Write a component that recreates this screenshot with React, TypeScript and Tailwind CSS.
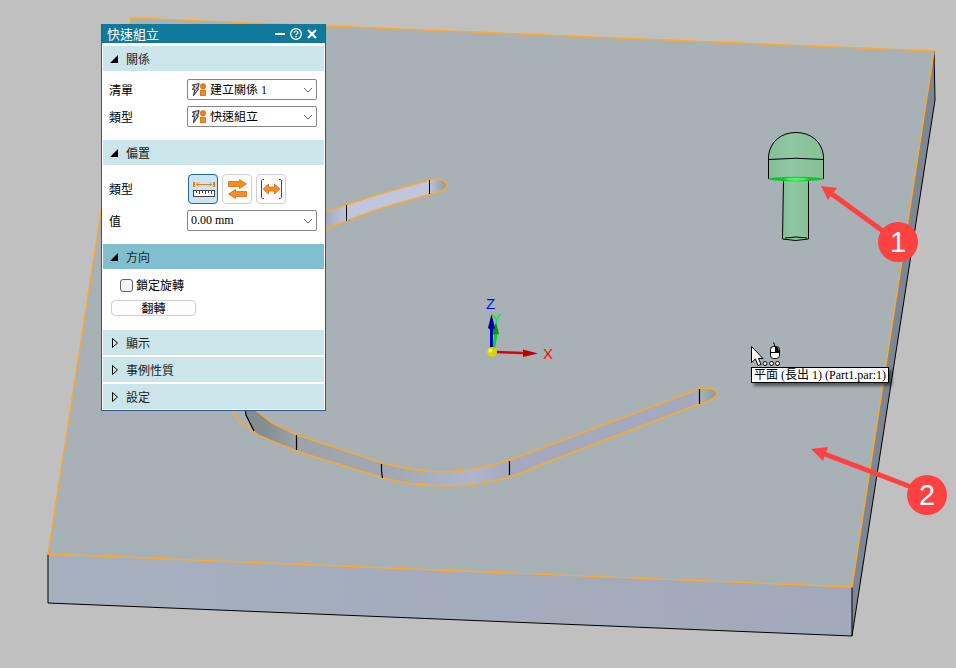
import { useState } from 'react'
import type { ReactNode } from 'react'

const sans = "font-['Noto_Sans_CJK_TC',sans-serif]"
const serif = "font-['Liberation_Serif','Noto_Sans_CJK_TC',serif]"

function Scene() {
    return (
        <svg
            viewBox="0 0 956 668"
            preserveAspectRatio="xMinYMin slice"
            className="absolute inset-0 h-full w-full"
            aria-hidden="true"
        >
            <defs>
                <linearGradient id="front" x1="0" x2="1">
                    <stop offset="0" stopColor="#a6b0bf" />
                    <stop offset="1" stopColor="#a2a9ba" />
                </linearGradient>
                <linearGradient id="slotTop" gradientUnits="userSpaceOnUse" x1="326" y1="0" x2="447" y2="0">
                    <stop offset="0" stopColor="#a3a9bd" />
                    <stop offset="0.17" stopColor="#bfc5dd" />
                    <stop offset="0.85" stopColor="#c0c6dd" />
                    <stop offset="1" stopColor="#8e979e" />
                </linearGradient>
                <linearGradient id="slotLow" gradientUnits="userSpaceOnUse" x1="245" y1="0" x2="717" y2="0">
                    <stop offset="0" stopColor="#828b8d" />
                    <stop offset="0.04" stopColor="#848d90" />
                    <stop offset="0.11" stopColor="#9ba4ac" />
                    <stop offset="0.3" stopColor="#a0a8b3" />
                    <stop offset="0.48" stopColor="#afb6cc" />
                    <stop offset="0.56" stopColor="#a4aabd" />
                    <stop offset="0.95" stopColor="#a4aabd" />
                    <stop offset="0.965" stopColor="#a9b1b8" />
                    <stop offset="1" stopColor="#8e979c" />
                </linearGradient>
                <linearGradient id="bolt" x1="0" x2="1">
                    <stop offset="0" stopColor="#83bf98" />
                    <stop offset="0.4" stopColor="#90c7a4" />
                    <stop offset="1" stopColor="#85c096" />
                </linearGradient>
            </defs>

            {/* Placa */}
            <path d="M934 51 L935 100 L852 636 L852 587 Z" fill="#7e8694" />
            <path d="M48 554 L852 587 L852 636 L48 603 Z" fill="url(#front)" />
            <path d="M131 18 L934 51 L852 587 L48 554 Z" fill="#a7b1b6" />
            <path d="M48 554 L48 603 L852 636 L852 587 M852 636 L935 100 L934 51" fill="none" stroke="#000" strokeWidth="1" />
            <path d="M131 18 L934 51 L852 587 L48 554 Z" fill="none" stroke="#fba92e" strokeWidth="1.4" />

            {/* Ranura superior */}
            <path
                d="M300 221 L346 205 L376 195 L430 180 Q446 177 447 186 Q446 191 430 194 L376 210 L346 221 L300 239"
                fill="url(#slotTop)"
                stroke="#fba92e"
                strokeWidth="1.4"
            />
            <path d="M346.500 205V221M429.500 180V194" stroke="#000" strokeWidth="1" />

            {/* Ranura inferior */}
            <path
                d="M245 405 L250 405 L258 412 L272 423 L297 435 L382 463 Q412 471 440 472 Q477 471 510 460 L699 389 Q716 386 717 394 Q715 400 699 404 L540 465 Q496 486 447 486 Q415 486 383 478 L296 451 L260 436 L254 431 L246 415 Z"
                fill="url(#slotLow)"
            />
            <path
                d="M250 405 L258 412 L272 423 L297 435 L382 463 Q412 471 440 472 Q477 471 510 460 L699 389 Q716 386 717 394 Q715 400 699 404 L540 465 Q496 486 447 486 Q415 486 383 478 L296 451 L260 436 L240 422 L228 405"
                fill="none"
                stroke="#fba92e"
                strokeWidth="1.4"
            />
            <path
                d="M245 408 L246 415 L254 431 M296.500 435V450 M381.500 464V471L382.500 478 M509.500 461V475 M699.500 389V404"
                fill="none"
                stroke="#000"
                strokeWidth="1.2"
            />

            {/* Tornillo */}
            <path d="M783.500 180H808.500V239Q796 242 782.500 239Z" fill="url(#bolt)" stroke="#000" />
            <path d="M785 238Q796 236 807 238" fill="none" stroke="#000" />
            <path d="M768.500 179V156C770 141 782 132.500 796 132.500S822 141 823.500 156V179Z" fill="url(#bolt)" />
            <path d="M768.500 179V156C770 141 782 132.500 796 132.500S822 141 823.500 156V179" fill="none" stroke="#000" />
            <path d="M768.500 159.500Q796 157 823.500 159.500" fill="none" stroke="#000" />
            <ellipse cx="796" cy="179" rx="28" ry="2.200" fill="#0ac62c" />
            <path d="M783 179Q796 176 809 179Q796 183 783 179Z" fill="#4ff06a" />

            {/* Ejes */}
            <g fontFamily="Liberation Sans, sans-serif" fontSize="15">
                <path d="M493 352L496 334" stroke="#00d81c" strokeWidth="3" />
                <path d="M491 335L496 322L499 334Z" fill="#009b14" />
                <path d="M494 352L523 353" stroke="#e00000" strokeWidth="2.500" />
                <path d="M523 349.500L538 353.500L523 357Z" fill="#c00000" />
                <path d="M491.500 352V327" stroke="#0000b8" strokeWidth="3" />
                <path d="M488 328L491.500 314L495 328Q491.500 331 488 328Z" fill="#000099" />
                <circle cx="492" cy="352" r="5" fill="#dfd200" />
                <circle cx="490.500" cy="350.500" r="2" fill="#fff56a" />
                <text x="486" y="309" fill="#0909f5">Z</text>
                <text x="491" y="324" fill="#00f01c">Y</text>
                <text x="543" y="359" fill="#f50a0a">X</text>
            </g>

            {/* Llamadas */}
            <g fill="#fd4241">
                <path d="M832 194L898 242M822 453L927 493" stroke="#fd4241" strokeWidth="5" />
                <path d="M821 186L837 188L828 200Z" />
                <path d="M811 449L828 447L823 461Z" />
                <circle cx="898" cy="242" r="20" />
                <circle cx="927" cy="495" r="20" />
            </g>
            <g fill="#fff" fontFamily="Liberation Sans, sans-serif" fontSize="29" textAnchor="middle">
                <text x="898" y="252">1</text>
                <text x="927" y="505">2</text>
            </g>

            {/* Cursor con botón derecho del ratón */}
            <path d="M751.500 346.500V362.500L755.500 359L758 365.500L761 364.500L758.500 358.500H763Z" fill="#fff" stroke="#000" />
            <path d="M774.500 347V344.500Q774.500 343 773 342.500" fill="none" stroke="#000" />
            <rect x="770.500" y="346.500" width="9" height="12" rx="3" fill="#fff" stroke="#000" />
            <path d="M775 347H777Q779 348 779 352H775Z" />
            <path d="M771 352.500H779" stroke="#000" />
            <g fill="#fff" stroke="#000">
                <circle cx="765" cy="363.500" r="2" />
                <circle cx="771.500" cy="363.500" r="2" />
                <circle cx="777.500" cy="363.500" r="2" />
            </g>
        </svg>
    )
}

function QuickIcon() {
    return (
        <svg viewBox="0 0 16 16" className="pointer-events-none absolute left-1 top-[3px] size-4" aria-hidden="true">
            <path d="M1.500 3L8 1.500L7.500 4.500L5.500 6.500L7.500 7L2.500 13.500L3.500 9L4 8L1.500 7.500L3.500 4.500Z" fill="#c9c9c9" stroke="#454545" strokeWidth="1.200" strokeLinejoin="round" />
            <circle cx="12" cy="4.300" r="2.800" fill="#f07d10" stroke="#d56300" strokeWidth="0.500" />
            <rect x="9.500" y="8.500" width="5" height="5" fill="#f58a1f" stroke="#d56300" strokeWidth="0.800" />
        </svg>
    )
}

function Chevron() {
    return (
        <svg viewBox="0 0 10 6" className="pointer-events-none h-[6px] w-[10px]" aria-hidden="true">
            <path d="M1 1L5 5L9 1" fill="none" stroke="#666" />
        </svg>
    )
}

function SelectRow({ id, label, value }: { id: string; label: string; value: string }) {
    return (
        <div className="flex items-center">
            <label htmlFor={id} className="w-[78px]">{label}</label>
            <div className="relative h-[21px] flex-1">
                <select
                    id={id}
                    className={`block h-full w-full appearance-none rounded-xs border border-[#858585] bg-white pl-[22px] text-xs leading-none ${serif}`}
                >
                    <option>{value}</option>
                </select>
                <QuickIcon />
                <span className="pointer-events-none absolute right-1 top-2">
                    <Chevron />
                </span>
            </div>
        </div>
    )
}

type SectionProps = { title: string; defaultOpen?: boolean; active?: boolean; children?: ReactNode }

function Section({ title, defaultOpen = false, active = false, children }: SectionProps) {
    const [open, setOpen] = useState(defaultOpen)

    return (
        <section>
            <button
                type="button"
                aria-expanded={open}
                onClick={() => setOpen(!open)}
                className={`flex h-[25px] w-full items-center gap-[7px] pl-[7px] text-left ${active ? 'bg-[#81bfce]' : 'bg-[#cce5ea]'}`}
            >
                <svg viewBox="0 0 9 12" className="h-3 w-[9px]" aria-hidden="true">
                    {open ? (
                        <path d="M8 2V10H0Z" fill="#000" />
                    ) : (
                        <path d="M2.500 1.500L7.500 6L2.500 10.500Z" fill="none" stroke="#000" />
                    )}
                </svg>
                <span className="text-[#222]">{title}</span>
            </button>
            {open && children}
        </section>
    )
}

const offsetTypes = [
    {
        name: '固定',
        icon: (
            <>
                <path d="M6 8V13M26 8V13" stroke="#f07d10" strokeWidth="2" />
                <path d="M8 10.500H24M10.500 8.500L8.500 10.500L10.500 12.500M21.500 8.500L23.500 10.500L21.500 12.500" fill="none" stroke="#f07d10" />
                <rect x="5.500" y="16.500" width="21" height="6" fill="#fff" stroke="#444" />
                <path d="M8.500 17V19M11.500 17V20M14.500 17V19M17.500 17V20M20.500 17V19M23.500 17V20" stroke="#444" />
            </>
        ),
    },
    {
        name: '浮動',
        icon: (
            <>
                <path d="M6.500 7.500H17.500V5.500L24.500 10L17.500 14.500V12.500H6.500Z" fill="#f78d22" stroke="#dd6c08" strokeWidth="0.800" />
                <path d="M24.500 17.500H13.500V15.500L6.500 20L13.500 24.500V22.500H24.500Z" fill="#f78d22" stroke="#dd6c08" strokeWidth="0.800" />
            </>
        ),
    },
    {
        name: '範圍',
        icon: (
            <>
                <path d="M8 5.500H6.500L5.500 6.500V23.500L6.500 24.500H8M23 5.500H24.500L25.500 6.500V23.500L24.500 24.500H23" fill="none" stroke="#444" />
                <path d="M7 15L12.500 10V13H18.500V10L24 15L18.500 20V17H12.500V20Z" fill="#f78d22" stroke="#dd6c08" strokeWidth="0.800" />
            </>
        ),
    },
]

function OffsetTypes() {
    const [selected, setSelected] = useState(0)

    return (
        <div className="flex items-center">
            <span id="offset-type" className="w-[79px]">類型</span>
            <div role="group" aria-labelledby="offset-type" className="flex gap-1">
                {offsetTypes.map((type, index) => (
                    <button
                        key={type.name}
                        type="button"
                        aria-label={type.name}
                        aria-pressed={selected === index}
                        onClick={() => setSelected(index)}
                        className={`size-[30px] rounded border ${selected === index ? 'border-[#1769aa] bg-[#cce4f7]' : 'border-[#cfcfcf] bg-[#fdfdfd]'}`}
                    >
                        <svg viewBox="1 1 28 28" className="size-7" aria-hidden="true">
                            {type.icon}
                        </svg>
                    </button>
                ))}
            </div>
        </div>
    )
}

function Panel() {
    return (
        <form className={`absolute left-[101px] top-6 w-[225px] border border-t-0 border-[#2f5597] bg-white text-xs leading-4 text-black ${sans}`}>
            <header className="flex h-[19px] items-center bg-[#11799c] pl-[5px] pr-[7px] text-white">
                <h1 className="flex-1 text-[13px]">快速組立</h1>
                <div className="flex items-center gap-1">
                    <button type="button" aria-label="最小化">
                        <svg viewBox="0 0 12 12" className="size-3">
                            <path d="M1 6H11" stroke="currentColor" strokeWidth="2" />
                        </svg>
                    </button>
                    <button type="button" aria-label="說明">
                        <svg viewBox="0 0 12 12" className="size-3">
                            <circle cx="6" cy="6" r="5.300" fill="none" stroke="currentColor" strokeWidth="1.300" />
                            <path d="M4.200 4.700Q4.200 3 6 3Q7.900 3 7.900 4.500Q7.900 5.400 6.800 6Q6 6.400 6 7.300" fill="none" stroke="currentColor" strokeWidth="1.200" />
                            <circle cx="6" cy="8.800" r="0.800" fill="currentColor" />
                        </svg>
                    </button>
                    <button type="button" aria-label="關閉">
                        <svg viewBox="0 0 12 12" className="size-3">
                            <path d="M2 2L10 10M10 2L2 10" stroke="currentColor" strokeWidth="2.200" />
                        </svg>
                    </button>
                </div>
            </header>

            <div className="flex flex-col gap-[2px] px-px pb-px pt-[3px]">
                <Section title="關係" defaultOpen>
                    <div className="flex flex-col gap-[6px] pb-[11px] pl-[6px] pr-[7px] pt-2">
                        <SelectRow id="list" label="清單" value="建立關係 1" />
                        <SelectRow id="relation-type" label="類型" value="快速組立" />
                    </div>
                </Section>

                <Section title="偏置" defaultOpen>
                    <div className="flex flex-col gap-[6px] pb-[11px] pl-[6px] pr-[7px] pt-[9px]">
                        <OffsetTypes />
                        <div className="flex items-center">
                            <label htmlFor="offset-value" className="w-[78px] shrink-0">值</label>
                            <div className="flex h-[21px] min-w-0 flex-1 items-center rounded-xs border border-[#858585] pr-[3px]">
                                <input
                                    id="offset-value"
                                    defaultValue="0.00 mm"
                                    className={`h-full w-full min-w-0 flex-1 pl-[3px] outline-none ${serif}`}
                                />
                                <button type="button" aria-label="最近的值">
                                    <Chevron />
                                </button>
                            </div>
                        </div>
                    </div>
                </Section>

                <Section title="方向" defaultOpen active>
                    <div className="flex flex-col items-start gap-[7px] pb-3 pl-2 pt-2">
                        <label className="ml-[9px] flex items-center gap-[3px]">
                            <input
                                type="checkbox"
                                className="size-[13px] appearance-none rounded-[3px] border border-[#626262] bg-[#f5f5f5] checked:bg-[#11799c]"
                            />
                            鎖定旋轉
                        </label>
                        <button type="button" className="h-4 w-[85px] rounded border border-[#cfcfcf] bg-[#fdfdfd] leading-none">
                            翻轉
                        </button>
                    </div>
                </Section>

                <Section title="顯示" />
                <Section title="事例性質" />
                <Section title="設定" />
            </div>
        </form>
    )
}

export default function App() {
    return (
        <main className="relative min-h-screen overflow-hidden bg-[#c0c0c0]">
            <Scene />
            <Panel />
            <div
                role="tooltip"
                className={`absolute left-[751px] top-[367px] whitespace-nowrap border border-black bg-white px-[2px] text-xs leading-[14px] text-black shadow-[3px_3px_3px_rgba(0,0,0,0.5)] ${serif}`}
            >
                平面 (長出 1) (Part1.par:1)
            </div>
        </main>
    )
}
